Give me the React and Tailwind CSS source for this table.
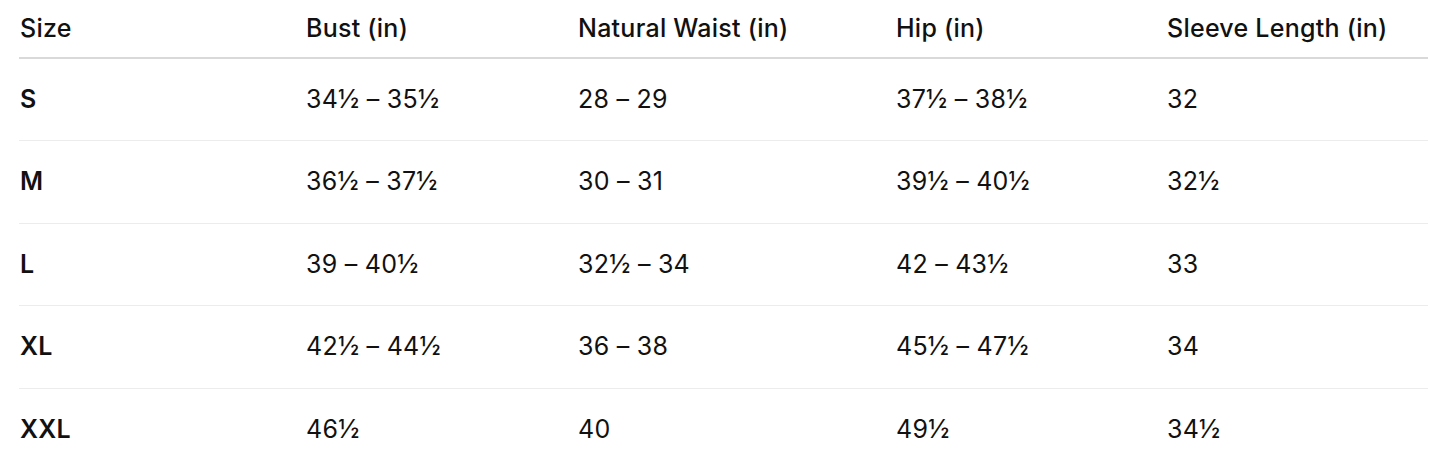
import React from "react";

const headers = ["Size", "Bust (in)", "Natural Waist (in)", "Hip (in)", "Sleeve Length (in)"];
const rows = [
  ["S", "34½ – 35½", "28 – 29", "37½ – 38½", "32"],
  ["M", "36½ – 37½", "30 – 31", "39½ – 40½", "32½"],
  ["L", "39 – 40½", "32½ – 34", "42 – 43½", "33"],
  ["XL", "42½ – 44½", "36 – 38", "45½ – 47½", "34"],
  ["XXL", "46½", "40", "49½", "34½"],
];
const widths = ["w-[286px]", "w-[272px]", "w-[318px]", "w-[271px]", "w-[262px]"];

export default function App() {
  return (
    <div className="bg-white w-[1445px] h-[473px] pl-[19px] pt-0 text-[#111111]" style={{ fontFamily: "Inter, 'Noto Sans', sans-serif" }}>
      <table className="w-[1409px] border-collapse table-fixed text-[25px] tracking-[0.01em]">
        <colgroup>
          {widths.map((w, i) => (
            <col key={i} className={w} />
          ))}
        </colgroup>
        <thead>
          <tr className="h-[58px] border-b-2 border-[#d9d9d9]">
            {headers.map((h, i) => (
              <th key={i} className="text-left font-medium p-0 pl-px align-middle">
                {h}
              </th>
            ))}
          </tr>
        </thead>
        <tbody>
          {rows.map((r, ri) => (
            <tr key={ri} className={`h-[82.5px] ${ri < rows.length - 1 ? "border-b border-[#ececec]" : ""}`}>
              {r.map((c, ci) => (
                <td key={ci} className={`p-0 pl-px align-middle ${ci === 0 ? "font-semibold" : "font-normal"}`}>
                  {c}
                </td>
              ))}
            </tr>
          ))}
        </tbody>
      </table>
    </div>
  );
}
